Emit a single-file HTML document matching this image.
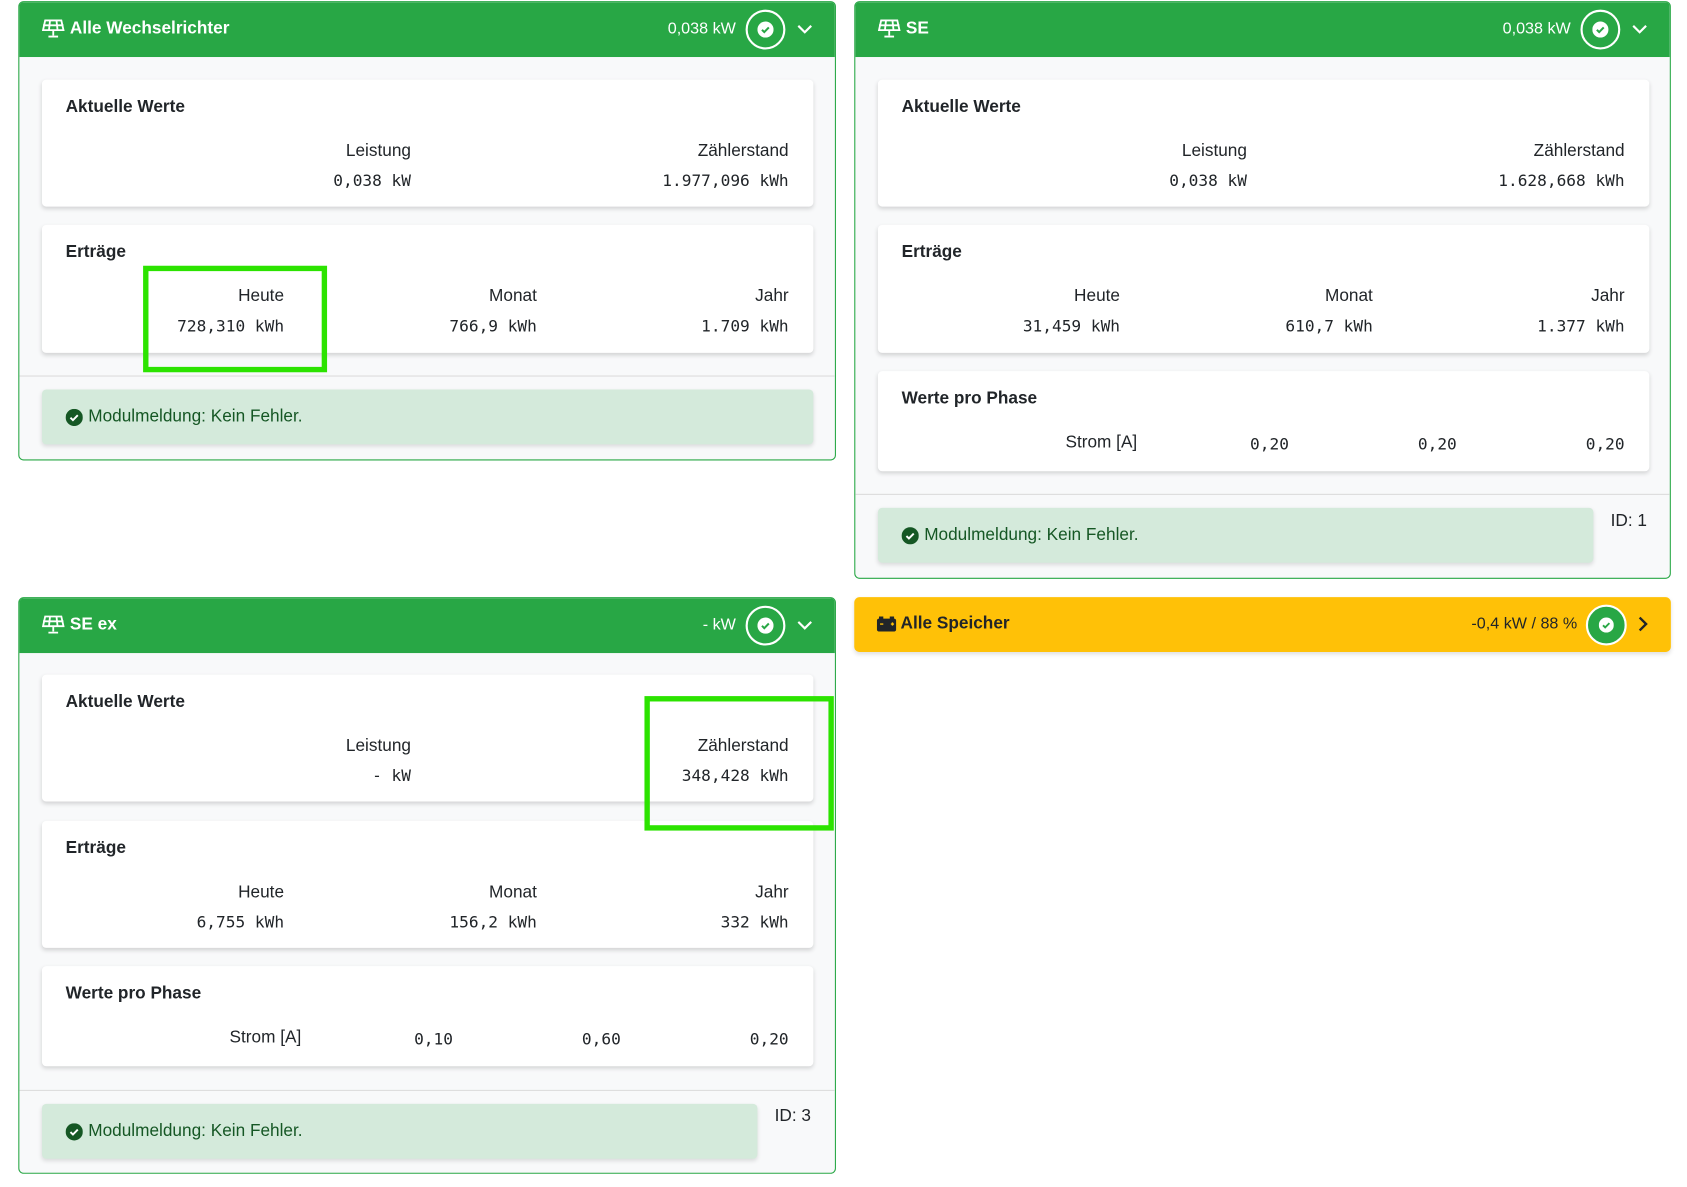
<!DOCTYPE html>
<html><head><meta charset="utf-8"><style>
*{box-sizing:border-box;margin:0;padding:0}
html,body{width:1687px;height:1187px;overflow:hidden;background:#fff}
#w{position:absolute;left:0;top:0;width:1568px;height:1103px;transform:scale(1.07589);transform-origin:0 0;font-family:"Liberation Sans",sans-serif;color:#212529}
.card{position:absolute;border:1px solid #28a745;border-radius:5px;background:#f8f9fa;overflow:hidden}
.hd{position:absolute;left:0;top:0;right:0;height:51px;background:#28a745;color:#fff}
.hd .t{position:absolute;left:21px;top:0;line-height:50px;font-weight:bold;font-size:16px;display:flex;align-items:center;gap:5px}
.hd .v{position:absolute;right:92px;top:0;line-height:50px;font-size:15px}
.ring{position:absolute;width:37px;height:37px;border:2px solid #fff;border-radius:50%;top:7px}
.ring svg{position:absolute;left:9px;top:9px}
.box{position:absolute;left:21px;width:717px;background:#fff;border-radius:4px;box-shadow:0 2px 4px rgba(0,0,0,.15)}
.h{position:absolute;left:22px;top:17px;font-weight:bold;font-size:16px}
.l,.n{position:absolute;left:0;text-align:right;white-space:nowrap;height:20px;line-height:20px}
.l{font-size:16px}
.n{font-family:"DejaVu Sans Mono","Liberation Mono",monospace;font-size:15px;top:84px}
.sep{position:absolute;left:0;right:0;height:1px;background:#dcdcdc}
.al{position:absolute;left:21px;height:51px;background:#d4eadb;border-radius:4px;box-shadow:0 2px 4px rgba(0,0,0,.12);color:#155724;font-size:16px;line-height:51px;padding-left:22px;display:flex;align-items:center;gap:5px}
.id{position:absolute;font-size:16px}
.hl{position:absolute;border:5px solid #2ce300}
</style></head><body><div id="w">

<!-- card 1 -->
<div class="card" style="left:17px;top:1px;width:760px;height:427px">
 <div class="hd"><div class="t"><svg width="21" height="18" viewBox="0 0 21 18" fill="none" stroke="#fff" stroke-width="1.7"><path d="M3 1h15l2 9H1z M1 5.5h19 M7.5 1l-1 9 M13.5 1l1 9 M10.5 10v5 M6 16h9"/></svg>Alle Wechselrichter</div>
 <div class="v">0,038 kW</div><div class="ring" style="left:675px"><svg width="15" height="15" viewBox="0 0 16 16"><circle cx="8" cy="8" r="8" fill="#fff"/><path d="M4.5 8.2l2.3 2.3 4.5-4.6" stroke="#28a745" stroke-width="2" fill="none"/></svg></div>
 <svg style="position:absolute;left:722px;top:19px" width="16" height="12" viewBox="0 0 16 12"><path d="M2 3l6 6 6-6" stroke="#fff" stroke-width="2" fill="none"/></svg></div>
 <div class="box" style="top:72px;height:118px"><div class="h">Aktuelle Werte</div>
  <div class="l" style="top:57px;width:343px">Leistung</div><div class="n" style="width:343px">0,038 kW</div>
  <div class="l" style="top:57px;width:694px">Zählerstand</div><div class="n" style="width:694px">1.977,096 kWh</div></div>
 <div class="box" style="top:207px;height:119px"><div class="h">Erträge</div>
  <div class="l" style="top:57px;width:225px">Heute</div><div class="n" style="width:225px">728,310 kWh</div>
  <div class="l" style="top:57px;width:460px">Monat</div><div class="n" style="width:460px">766,9 kWh</div>
  <div class="l" style="top:57px;width:694px">Jahr</div><div class="n" style="width:694px">1.709 kWh</div></div>
 <div class="sep" style="top:347px"></div>
 <div class="al" style="top:360px;width:717px"><svg width="16" height="16" viewBox="0 0 16 16"><circle cx="8" cy="8" r="8" fill="#155724"/><path d="M4.5 8.2l2.3 2.3 4.5-4.6" stroke="#fff" stroke-width="1.8" fill="none"/></svg>Modulmeldung: Kein Fehler.</div>
</div>

<!-- card 2 -->
<div class="card" style="left:794px;top:1px;width:759px;height:537px">
 <div class="hd"><div class="t"><svg width="21" height="18" viewBox="0 0 21 18" fill="none" stroke="#fff" stroke-width="1.7"><path d="M3 1h15l2 9H1z M1 5.5h19 M7.5 1l-1 9 M13.5 1l1 9 M10.5 10v5 M6 16h9"/></svg>SE</div>
 <div class="v">0,038 kW</div><div class="ring" style="left:674px"><svg width="15" height="15" viewBox="0 0 16 16"><circle cx="8" cy="8" r="8" fill="#fff"/><path d="M4.5 8.2l2.3 2.3 4.5-4.6" stroke="#28a745" stroke-width="2" fill="none"/></svg></div>
 <svg style="position:absolute;left:721px;top:19px" width="16" height="12" viewBox="0 0 16 12"><path d="M2 3l6 6 6-6" stroke="#fff" stroke-width="2" fill="none"/></svg></div>
 <div class="box" style="top:72px;height:118px"><div class="h">Aktuelle Werte</div>
  <div class="l" style="top:57px;width:343px">Leistung</div><div class="n" style="width:343px">0,038 kW</div>
  <div class="l" style="top:57px;width:694px">Zählerstand</div><div class="n" style="width:694px">1.628,668 kWh</div></div>
 <div class="box" style="top:207px;height:119px"><div class="h">Erträge</div>
  <div class="l" style="top:57px;width:225px">Heute</div><div class="n" style="width:225px">31,459 kWh</div>
  <div class="l" style="top:57px;width:460px">Monat</div><div class="n" style="width:460px">610,7 kWh</div>
  <div class="l" style="top:57px;width:694px">Jahr</div><div class="n" style="width:694px">1.377 kWh</div></div>
 <div class="box" style="top:343px;height:93px"><div class="h">Werte pro Phase</div>
  <div class="l" style="top:57px;width:241px">Strom [A]</div><div class="n" style="top:58px;width:382px">0,20</div>
  <div class="n" style="top:58px;width:538px">0,20</div><div class="n" style="top:58px;width:694px">0,20</div></div>
 <div class="sep" style="top:457px"></div>
 <div class="al" style="top:470px;width:665px"><svg width="16" height="16" viewBox="0 0 16 16"><circle cx="8" cy="8" r="8" fill="#155724"/><path d="M4.5 8.2l2.3 2.3 4.5-4.6" stroke="#fff" stroke-width="1.8" fill="none"/></svg>Modulmeldung: Kein Fehler.</div>
 <div class="id" style="left:702px;top:474px">ID: 1</div>
</div>

<!-- card 3 -->
<div class="card" style="left:17px;top:555px;width:760px;height:536px">
 <div class="hd"><div class="t"><svg width="21" height="18" viewBox="0 0 21 18" fill="none" stroke="#fff" stroke-width="1.7"><path d="M3 1h15l2 9H1z M1 5.5h19 M7.5 1l-1 9 M13.5 1l1 9 M10.5 10v5 M6 16h9"/></svg>SE ex</div>
 <div class="v">- kW</div><div class="ring" style="left:675px"><svg width="15" height="15" viewBox="0 0 16 16"><circle cx="8" cy="8" r="8" fill="#fff"/><path d="M4.5 8.2l2.3 2.3 4.5-4.6" stroke="#28a745" stroke-width="2" fill="none"/></svg></div>
 <svg style="position:absolute;left:722px;top:19px" width="16" height="12" viewBox="0 0 16 12"><path d="M2 3l6 6 6-6" stroke="#fff" stroke-width="2" fill="none"/></svg></div>
 <div class="box" style="top:71px;height:118px"><div class="h">Aktuelle Werte</div>
  <div class="l" style="top:57px;width:343px">Leistung</div><div class="n" style="width:343px">- kW</div>
  <div class="l" style="top:57px;width:694px">Zählerstand</div><div class="n" style="width:694px">348,428 kWh</div></div>
 <div class="box" style="top:207px;height:118px"><div class="h">Erträge</div>
  <div class="l" style="top:57px;width:225px">Heute</div><div class="n" style="width:225px">6,755 kWh</div>
  <div class="l" style="top:57px;width:460px">Monat</div><div class="n" style="width:460px">156,2 kWh</div>
  <div class="l" style="top:57px;width:694px">Jahr</div><div class="n" style="width:694px">332 kWh</div></div>
 <div class="box" style="top:342px;height:93px"><div class="h">Werte pro Phase</div>
  <div class="l" style="top:57px;width:241px">Strom [A]</div><div class="n" style="top:58px;width:382px">0,10</div>
  <div class="n" style="top:58px;width:538px">0,60</div><div class="n" style="top:58px;width:694px">0,20</div></div>
 <div class="sep" style="top:457px"></div>
 <div class="al" style="top:470px;width:665px"><svg width="16" height="16" viewBox="0 0 16 16"><circle cx="8" cy="8" r="8" fill="#155724"/><path d="M4.5 8.2l2.3 2.3 4.5-4.6" stroke="#fff" stroke-width="1.8" fill="none"/></svg>Modulmeldung: Kein Fehler.</div>
 <div class="id" style="left:702px;top:473px">ID: 3</div>
</div>

<!-- Speicher -->
<div style="position:absolute;left:794px;top:555px;width:759px;height:51px;background:#ffc107;border-radius:5px;box-shadow:0 2px 4px rgba(0,0,0,.12);color:#212529">
 <div style="position:absolute;left:21px;top:0;line-height:50px;font-weight:bold;font-size:16px;display:flex;align-items:center;gap:4px"><svg width="18" height="14" viewBox="0 0 18 14"><rect x="0" y="2" width="18" height="12" rx="2" fill="#212529"/><rect x="2" y="0" width="4" height="3" fill="#212529"/><rect x="12" y="0" width="4" height="3" fill="#212529"/><path d="M3 7h3M13 7h3M14.5 5.5v3" stroke="#ffc107" stroke-width="1.3"/></svg>Alle Speicher</div>
 <div style="position:absolute;right:87px;top:0;line-height:50px;font-size:15px">-0,4 kW / 88 %</div>
 <div style="position:absolute;left:680px;top:7px;width:38px;height:38px;border-radius:50%;background:#28a745;border:2px solid #fff"><svg style="position:absolute;left:10px;top:10px" width="14" height="14" viewBox="0 0 16 16"><circle cx="8" cy="8" r="8" fill="#fff"/><path d="M4.5 8.2l2.3 2.3 4.5-4.6" stroke="#28a745" stroke-width="2" fill="none"/></svg></div>
 <svg style="position:absolute;left:727px;top:17px" width="12" height="16" viewBox="0 0 12 16"><path d="M3 2l6 6-6 6" stroke="#212529" stroke-width="2.2" fill="none"/></svg>
</div>

<div class="hl" style="left:133px;top:247px;width:171px;height:99px"></div>
<div class="hl" style="left:599px;top:647px;width:176px;height:125px"></div>
</div></body></html>
